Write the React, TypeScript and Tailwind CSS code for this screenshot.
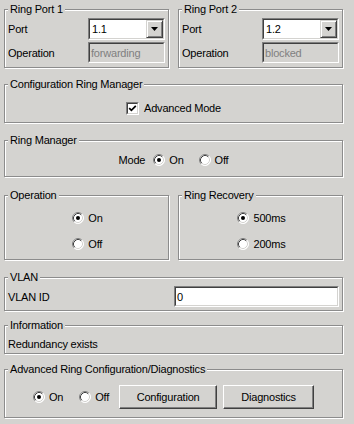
import React from "react";

const BG = "bg-[#d4d3d0]";

function Panel({ title, className = "", children }: { title: string; className?: string; children?: React.ReactNode }) {
  return (
    <div className={`relative border border-[#8c8c8c] shadow-[inset_1px_1px_0_#ffffff,1px_1px_0_#ffffff] ${className}`}>
      <span className={`absolute left-[3px] top-[-7px] ${BG} px-[2px] leading-[13px] whitespace-nowrap`}>{title}</span>
      {children}
    </div>
  );
}

function Radio({ on }: { on?: boolean }) {
  return (
    <svg width="12" height="12" viewBox="0 0 12 12" className="shrink-0">
      <circle cx="6" cy="6" r="5.5" fill="#ffffff" />
      <path d="M2.11 9.89A5.5 5.5 0 0 1 9.89 2.11" stroke="#808080" fill="none" />
      <path d="M9.89 2.11A5.5 5.5 0 0 1 2.11 9.89" stroke="#ffffff" fill="none" />
      <path d="M2.82 9.18A4.5 4.5 0 0 1 9.18 2.82" stroke="#404040" fill="none" />
      <path d="M9.18 2.82A4.5 4.5 0 0 1 2.82 9.18" stroke="#d4d3d0" fill="none" />
      {on && <circle cx="6" cy="6" r="2" fill="#000000" />}
    </svg>
  );
}

function RadioLabel({ on, label }: { on?: boolean; label: string }) {
  return (
    <div className="flex items-center gap-[4px] h-[14px]">
      <Radio on={on} />
      <span className="leading-[14px]">{label}</span>
    </div>
  );
}

function Sunken({ className = "", inner = "", children }: { className?: string; inner?: string; children?: React.ReactNode }) {
  return (
    <div className={`border border-t-[#808080] border-l-[#808080] border-b-white border-r-white ${className}`}>
      <div className={`h-full border border-t-[#404040] border-l-[#404040] border-b-[#d4d3d0] border-r-[#d4d3d0] flex items-center ${inner}`}>
        {children}
      </div>
    </div>
  );
}

function Combo({ value }: { value: string }) {
  return (
    <Sunken className="h-[22px] w-[77px]" inner="bg-white">
      <span className="flex-1 pl-[2px] leading-[14px]">{value}</span>
      <div className="h-[18px] w-[17px] border border-t-[#d4d3d0] border-l-[#d4d3d0] border-b-[#404040] border-r-[#404040] bg-[#d4d3d0] shadow-[inset_1px_1px_0_#ffffff,inset_-1px_-1px_0_#808080] flex items-center justify-center">
        <svg width="7" height="4" viewBox="0 0 7 4">
          <path d="M0 0H7L3.5 4Z" fill="#000000" />
        </svg>
      </div>
    </Sunken>
  );
}

function Disabled({ value }: { value: string }) {
  return (
    <Sunken className="h-[21px] w-[77px]" inner={BG}>
      <span className="pl-[1px] leading-[14px] text-[#808080]">{value}</span>
    </Sunken>
  );
}

function Button({ label, w }: { label: string; w: string }) {
  return (
    <div className={`${w} h-[24px] border border-t-white border-l-white border-b-[#404040] border-r-[#404040] shadow-[inset_-1px_-1px_0_#808080] ${BG} flex items-center justify-center leading-[14px]`}>
      {label}
    </div>
  );
}

function PortPanel({ title, port, op }: { title: string; port: string; op: string }) {
  return (
    <Panel title={title} className="w-[165px] h-[59px] pt-[8px] pl-[3px]">
      <div className="grid grid-cols-[80px_77px] items-center">
        <span className="leading-[14px]">Port</span>
        <Combo value={port} />
        <span className="leading-[14px] mt-[2px]">Operation</span>
        <div className="mt-[2px]">
          <Disabled value={op} />
        </div>
      </div>
    </Panel>
  );
}

export default function App() {
  return (
    <div className={`w-[354px] h-[424px] overflow-hidden ${BG} text-black text-[11px] tracking-[-0.2px] font-['Liberation_Sans',Arial,sans-serif] pl-[4px] pt-[9px]`}>
      <div className="w-[339px] flex flex-col">
        <div className="flex justify-between">
          <PortPanel title="Ring Port 1" port="1.1" op="forwarding" />
          <PortPanel title="Ring Port 2" port="1.2" op="blocked" />
        </div>

        <Panel title="Configuration Ring Manager" className="mt-[16px] h-[39px] pt-[16px]">
          <div className="flex justify-center items-center gap-[5px]">
            <div className="w-[13px] h-[13px] border border-t-[#808080] border-l-[#808080] border-b-white border-r-white">
              <div className="w-full h-full border border-t-[#404040] border-l-[#404040] border-b-[#d4d3d0] border-r-[#d4d3d0] bg-white flex items-center justify-center">
                <svg width="9" height="9" viewBox="0 0 9 9">
                  <path d="M1.2 4.2L3.4 6.4L7.8 1.8" stroke="#000000" strokeWidth="1.7" fill="none" />
                </svg>
              </div>
            </div>
            <span className="leading-[14px]">Advanced Mode</span>
          </div>
        </Panel>

        <Panel title="Ring Manager" className="mt-[17px] h-[37px] pt-[12px]">
          <div className="flex justify-center items-center">
            <span className="leading-[14px] mr-[8px]">Mode</span>
            <RadioLabel on label="On" />
            <div className="w-[15px]" />
            <RadioLabel label="Off" />
          </div>
        </Panel>

        <div className="mt-[18px] flex justify-between">
          <Panel title="Operation" className="w-[165px] h-[65px] pt-[15px] flex justify-center">
            <div className="flex flex-col gap-[12px] pl-[2px]">
              <RadioLabel on label="On" />
              <RadioLabel label="Off" />
            </div>
          </Panel>
          <Panel title="Ring Recovery" className="w-[165px] h-[65px] pt-[15px] flex justify-center">
            <div className="flex flex-col gap-[12px] pl-[2px]">
              <RadioLabel on label="500ms" />
              <RadioLabel label="200ms" />
            </div>
          </Panel>
        </div>

        <Panel title="VLAN" className="mt-[17px] h-[34px] pt-[8px] pl-[3px]">
          <div className="flex items-center">
            <span className="w-[166px] leading-[14px]">VLAN ID</span>
            <Sunken className="h-[21px] w-[165px]" inner="bg-white">
              <span className="pl-[1px] leading-[14px]">0</span>
            </Sunken>
          </div>
        </Panel>

        <Panel title="Information" className="mt-[14px] h-[29px] pt-[11px] pl-[3px]">
          <span className="leading-[14px] block">Redundancy exists</span>
        </Panel>

        <Panel title="Advanced Ring Configuration/Diagnostics" className="mt-[15px] h-[49px] pt-[15px]">
          <div className="flex justify-center items-center h-[24px]">
            <RadioLabel on label="On" />
            <div className="w-[16px]" />
            <RadioLabel label="Off" />
            <div className="w-[10px]" />
            <Button label="Configuration" w="w-[98px]" />
            <div className="w-[6px]" />
            <Button label="Diagnostics" w="w-[91px]" />
          </div>
        </Panel>
      </div>
    </div>
  );
}
